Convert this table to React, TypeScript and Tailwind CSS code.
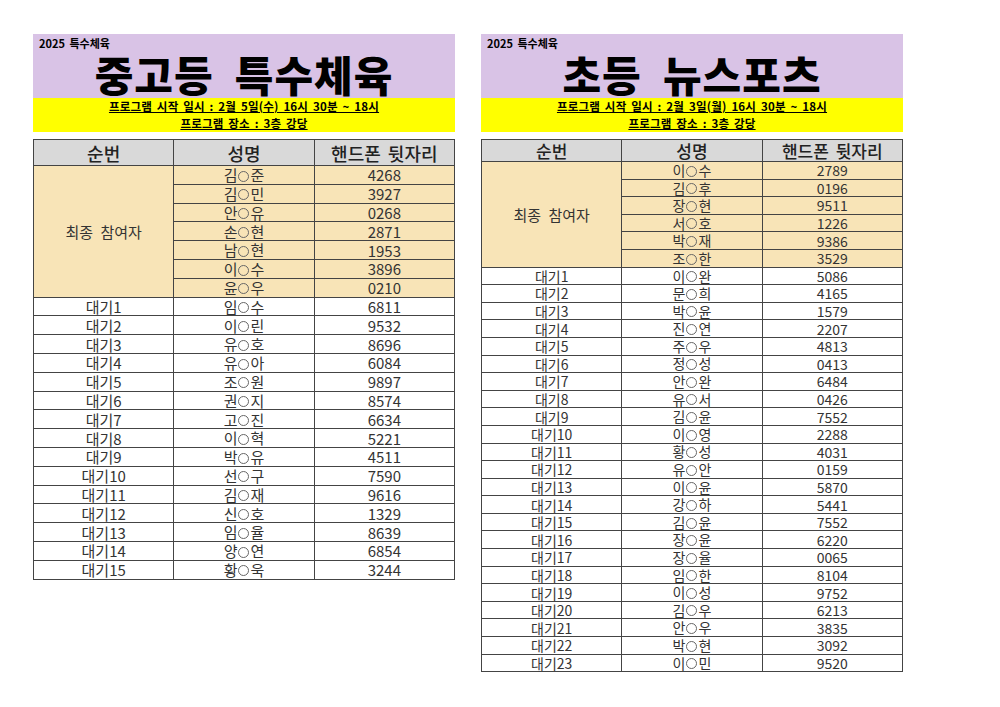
import React from 'react';

type Row = [string, string];

const leftFinal: Row[] = [
  ['김○준', '4268'],
  ['김○민', '3927'],
  ['안○유', '0268'],
  ['손○현', '2871'],
  ['남○현', '1953'],
  ['이○수', '3896'],
  ['윤○우', '0210'],
];

const leftWait: Row[] = [
  ['임○수', '6811'],
  ['이○린', '9532'],
  ['유○호', '8696'],
  ['유○아', '6084'],
  ['조○원', '9897'],
  ['권○지', '8574'],
  ['고○진', '6634'],
  ['이○혁', '5221'],
  ['박○유', '4511'],
  ['선○구', '7590'],
  ['김○재', '9616'],
  ['신○호', '1329'],
  ['임○율', '8639'],
  ['양○연', '6854'],
  ['황○욱', '3244'],
];

const rightFinal: Row[] = [
  ['이○수', '2789'],
  ['김○후', '0196'],
  ['장○현', '9511'],
  ['서○호', '1226'],
  ['박○재', '9386'],
  ['조○한', '3529'],
];

const rightWait: Row[] = [
  ['이○완', '5086'],
  ['문○희', '4165'],
  ['박○윤', '1579'],
  ['진○연', '2207'],
  ['주○우', '4813'],
  ['정○성', '0413'],
  ['안○완', '6484'],
  ['유○서', '0426'],
  ['김○윤', '7552'],
  ['이○영', '2288'],
  ['황○성', '4031'],
  ['유○안', '0159'],
  ['이○윤', '5870'],
  ['강○하', '5441'],
  ['김○윤', '7552'],
  ['장○윤', '6220'],
  ['장○율', '0065'],
  ['임○한', '8104'],
  ['이○성', '9752'],
  ['김○우', '6213'],
  ['안○우', '3835'],
  ['박○현', '3092'],
  ['이○민', '9520'],
];

const font = { fontFamily: '"Noto Sans CJK KR", "Noto Sans", sans-serif' };

// name with the masked middle letter drawn as a small ring
function Name({ v }: { v: string }) {
  return (
    <span>
      {v[0]}
      <span className="inline-block align-middle mx-[1px] w-[11px] h-[11px] rounded-full border border-[#666] relative top-[-1px]" />
      {v[2]}
    </span>
  );
}

function Sheet({
  title,
  date,
  finals,
  waits,
  big,
}: {
  title: string;
  date: string;
  finals: Row[];
  waits: Row[];
  big: boolean;
}) {
  const rowH = big ? 'h-[18.8px] text-[15px]' : 'h-[17.6px] text-[14px]';
  const td = 'border border-[#444] text-center leading-none p-0 text-[#333]';
  return (
    <div className="w-[422px]" style={font}>
      <div className="bg-[#d9c3e6] h-[64px] relative">
        <div className="absolute left-[6px] top-[1px] text-[11px] font-bold text-black [word-spacing:2px]">2025 특수체육</div>
        <div className="pt-[19px] text-center text-[42px] font-black leading-none text-black tracking-[1px] whitespace-pre">
          {title}
        </div>
      </div>
      <div className="bg-[#ffff00] h-[34px] flex flex-col items-center justify-center text-[11.5px] font-bold text-black leading-[17px] tracking-[0.2px] [word-spacing:2px]">
        <div className="underline">{date}</div>
        <div className="underline">프로그램 장소 : 3층 강당</div>
      </div>
      <table className="mt-[7px] w-full border-collapse table-fixed">
        <thead>
          <tr className={big ? 'h-[26px]' : 'h-[22px]'}>
            {['순번', '성명', '핸드폰 뒷자리'].map((h) => (
              <th
                key={h}
                className={`border border-[#444] bg-[#d9d9d9] font-medium text-[#222] leading-none p-0 [word-spacing:3px] ${big ? 'text-[18px]' : 'text-[17px]'}`}
              >
                {h}
              </th>
            ))}
          </tr>
        </thead>
        <tbody>
          {finals.map(([n, p], i) => (
            <tr key={'f' + i} className={rowH}>
              {i === 0 && (
                <td rowSpan={finals.length} className={`${td} bg-[#f8e4b7] text-[15px] [word-spacing:4px]`}>
                  최종 참여자
                </td>
              )}
              <td className={`${td} bg-[#f8e4b7]`}>
                <Name v={n} />
              </td>
              <td className={`${td} bg-[#f8e4b7]`}>{p}</td>
            </tr>
          ))}
          {waits.map(([n, p], i) => (
            <tr key={'w' + i} className={rowH}>
              <td className={`${td} bg-white`}>대기{i + 1}</td>
              <td className={`${td} bg-white`}>
                <Name v={n} />
              </td>
              <td className={`${td} bg-white`}>{p}</td>
            </tr>
          ))}
        </tbody>
      </table>
    </div>
  );
}

export default function App() {
  return (
    <div className="w-[1000px] h-[707px] bg-white pt-[34px] pl-[33px] flex gap-[26px] items-start">
      <Sheet
        title={'중고등  특수체육'}
        date="프로그램 시작 일시 : 2월 5일(수) 16시 30분 ~ 18시"
        finals={leftFinal}
        waits={leftWait}
        big
      />
      <Sheet
        title={'초등  뉴스포츠'}
        date="프로그램 시작 일시 : 2월 3일(월) 16시 30분 ~ 18시"
        finals={rightFinal}
        waits={rightWait}
        big={false}
      />
    </div>
  );
}
